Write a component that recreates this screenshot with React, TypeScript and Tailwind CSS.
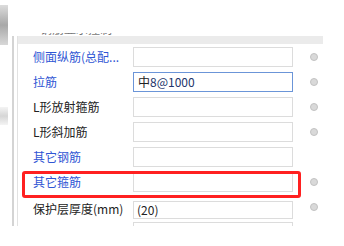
const rows = [
  { label: '侧面纵筋(总配...', blue: true, value: '', radio: true },
  { label: '拉筋', blue: true, value: 'tie', radio: true, focus: true },
  { label: 'L形放射箍筋', blue: false, value: '', radio: true },
  { label: 'L形斜加筋', blue: false, value: '', radio: true },
  { label: '其它钢筋', blue: true, value: '', radio: false },
  { label: '其它箍筋', blue: true, value: '', radio: true },
];

function Radio() {
  return <div className="w-[8px] h-[8px] rounded-full bg-[#d9d9d9] border border-[#c2c2c2]" />;
}

export default function App() {
  return (
    <div className="relative w-[344px] h-[246px] bg-white overflow-hidden flex font-['Noto_Sans_CJK_SC','Liberation_Sans',sans-serif] text-[12px]">
      {/* blurred window edge on the left */}
      <div className="w-[8px] flex flex-col">
        <div className="mt-[5px] h-[40px] bg-gradient-to-b from-[#dcdcdc] via-[#a8a8a8] to-[#d8d8d8]" />
        <div className="mt-[62px] h-[18px] bg-gradient-to-b from-[#f4f4f4] via-[#d6d6d6] to-[#f4f4f4]" />
      </div>
      <div className="w-[4px]" />
      <div className="mt-[36px] h-[190px] w-[2px] bg-[#d4d4d4]" />
      <div className="w-[3px]" />
      <div className="mt-[36px] h-[190px] w-[1px] bg-[#e2e2e2]" />

      <div className="mt-[33px] h-[193px] w-[305px] overflow-hidden flex flex-col">
        <div className="h-[11px] shrink-0 overflow-hidden bg-[linear-gradient(to_bottom,#ffffff_3px,#ebebeb_3px)]">
          <div className="-mt-[10px] pl-[22px] leading-[12px] text-[#777]">钢筋显示控制</div>
        </div>
        <div className="pt-[3px] flex flex-col">
          {rows.map((r) => (
            <div key={r.label} className="h-[25px] shrink-0 flex items-start">
              <div className={`w-[115px] pl-[15px] h-[20px] leading-[20px] whitespace-nowrap ${r.blue ? 'text-[#2f55d4]' : 'text-[#222]'}`}>
                {r.label}
              </div>
              <div
                className={`w-[160px] h-[20px] leading-[18px] pl-[4px] border ${r.focus ? 'border-[#6b95d8]' : 'border-[#dcdcdc]'}`}
              >
                {r.value === 'tie' && (
                  <span>
                    <span className="text-[#222]">中</span>
                    <span className="text-[#22346a]">8@1000</span>
                  </span>
                )}
              </div>
              <div className="ml-[17px] h-[20px] flex items-center">{r.radio && <Radio />}</div>
            </div>
          ))}
          <div className="h-[25px] shrink-0 flex items-start">
            <div className="w-[115px] pl-[15px] mt-[2px] h-[20px] leading-[20px] whitespace-nowrap text-[#222]">保护层厚度(mm)</div>
            <div className="mt-[4px] w-[160px] h-[18px] leading-[16px] pl-[3px] border border-[#dcdcdc] text-[#222]">(20)</div>
            <div className="ml-[17px] mt-[6px]">
              <Radio />
            </div>
          </div>
          <div className="h-[25px] shrink-0 flex items-start">
            <div className="w-[115px]" />
            <div className="w-[160px] h-[20px] border border-[#dcdcdc]" />
          </div>
        </div>
      </div>

      {/* red highlight annotation */}
      <div className="absolute left-[22px] top-[171px] w-[279px] h-[27px] border-[3px] border-[#ff2020] rounded-[3px]" />
    </div>
  );
}
